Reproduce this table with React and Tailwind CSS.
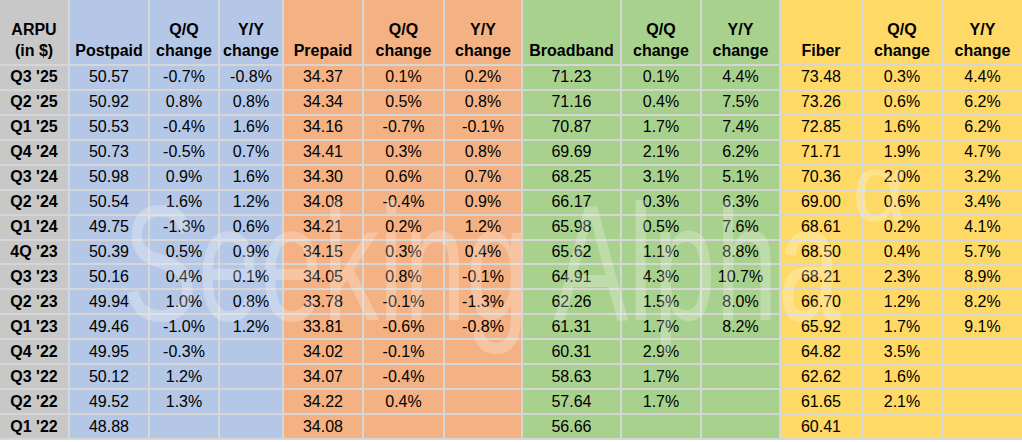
import React from "react";

const colBg = [
  "bg-[#c8c8c8]",
  "bg-[#b4c7e7]",
  "bg-[#b4c7e7]",
  "bg-[#b4c7e7]",
  "bg-[#f4b183]",
  "bg-[#f4b183]",
  "bg-[#f4b183]",
  "bg-[#a9d18e]",
  "bg-[#a9d18e]",
  "bg-[#a9d18e]",
  "bg-[#ffd966]",
  "bg-[#ffd966]",
  "bg-[#ffd966]",
];

const headers = [
  ["ARPU", "(in $)"],
  ["Postpaid"],
  ["Q/Q", "change"],
  ["Y/Y", "change"],
  ["Prepaid"],
  ["Q/Q", "change"],
  ["Y/Y", "change"],
  ["Broadband"],
  ["Q/Q", "change"],
  ["Y/Y", "change"],
  ["Fiber"],
  ["Q/Q", "change"],
  ["Y/Y", "change"],
];

const rows = [
  ["Q3 '25", "50.57", "-0.7%", "-0.8%", "34.37", "0.1%", "0.2%", "71.23", "0.1%", "4.4%", "73.48", "0.3%", "4.4%"],
  ["Q2 '25", "50.92", "0.8%", "0.8%", "34.34", "0.5%", "0.8%", "71.16", "0.4%", "7.5%", "73.26", "0.6%", "6.2%"],
  ["Q1 '25", "50.53", "-0.4%", "1.6%", "34.16", "-0.7%", "-0.1%", "70.87", "1.7%", "7.4%", "72.85", "1.6%", "6.2%"],
  ["Q4 '24", "50.73", "-0.5%", "0.7%", "34.41", "0.3%", "0.8%", "69.69", "2.1%", "6.2%", "71.71", "1.9%", "4.7%"],
  ["Q3 '24", "50.98", "0.9%", "1.6%", "34.30", "0.6%", "0.7%", "68.25", "3.1%", "5.1%", "70.36", "2.0%", "3.2%"],
  ["Q2 '24", "50.54", "1.6%", "1.2%", "34.08", "-0.4%", "0.9%", "66.17", "0.3%", "6.3%", "69.00", "0.6%", "3.4%"],
  ["Q1 '24", "49.75", "-1.3%", "0.6%", "34.21", "0.2%", "1.2%", "65.98", "0.5%", "7.6%", "68.61", "0.2%", "4.1%"],
  ["4Q '23", "50.39", "0.5%", "0.9%", "34.15", "0.3%", "0.4%", "65.62", "1.1%", "8.8%", "68.50", "0.4%", "5.7%"],
  ["Q3 '23", "50.16", "0.4%", "0.1%", "34.05", "0.8%", "-0.1%", "64.91", "4.3%", "10.7%", "68.21", "2.3%", "8.9%"],
  ["Q2 '23", "49.94", "1.0%", "0.8%", "33.78", "-0.1%", "-1.3%", "62.26", "1.5%", "8.0%", "66.70", "1.2%", "8.2%"],
  ["Q1 '23", "49.46", "-1.0%", "1.2%", "33.81", "-0.6%", "-0.8%", "61.31", "1.7%", "8.2%", "65.92", "1.7%", "9.1%"],
  ["Q4 '22", "49.95", "-0.3%", "", "34.02", "-0.1%", "", "60.31", "2.9%", "", "64.82", "3.5%", ""],
  ["Q3 '22", "50.12", "1.2%", "", "34.07", "-0.4%", "", "58.63", "1.7%", "", "62.62", "1.6%", ""],
  ["Q2 '22", "49.52", "1.3%", "", "34.22", "0.4%", "", "57.64", "1.7%", "", "61.65", "2.1%", ""],
  ["Q1 '22", "48.88", "", "", "34.08", "", "", "56.66", "", "", "60.41", "", ""],
];

export default function App() {
  return (
    <div
      className="relative w-[1022px] h-[442px] bg-white overflow-hidden text-black"
      style={{ fontFamily: '"Liberation Sans", Arial, sans-serif' }}
    >
      <div className="grid h-[440px] pb-[2px] gap-[2px] bg-[#d6d6d6] grid-cols-[68px_78px_68px_62px_78px_79px_76px_97px_78px_77px_80px_78px_79px] grid-rows-[64px_repeat(15,minmax(0,1fr))]">
        {headers.map((h, i) => (
          <div
            key={"h" + i}
            className={`${colBg[i]} flex flex-col items-center justify-end pb-[3px] text-[16px] font-bold leading-[21px]`}
          >
            {h.map((t, j) => (
              <span key={j} className="whitespace-nowrap">
                {t}
              </span>
            ))}
          </div>
        ))}
        {rows.map((r, ri) =>
          r.map((c, ci) => (
            <div
              key={ri + "-" + ci}
              className={`${colBg[ci]} flex items-center justify-center text-[16px] leading-none whitespace-nowrap ${
                ci === 0 ? "font-bold" : ""
              }`}
            >
              {c}
            </div>
          ))
        )}
      </div>

      <div className="pointer-events-none absolute left-[123px] top-[181px] origin-left scale-x-[0.68] text-[165px] leading-none whitespace-nowrap text-white/25">
        Seeking Alpha
      </div>
      <div className="pointer-events-none absolute left-[852px] top-[140px] text-[96px] leading-none text-white/25">
        α
      </div>
    </div>
  );
}
